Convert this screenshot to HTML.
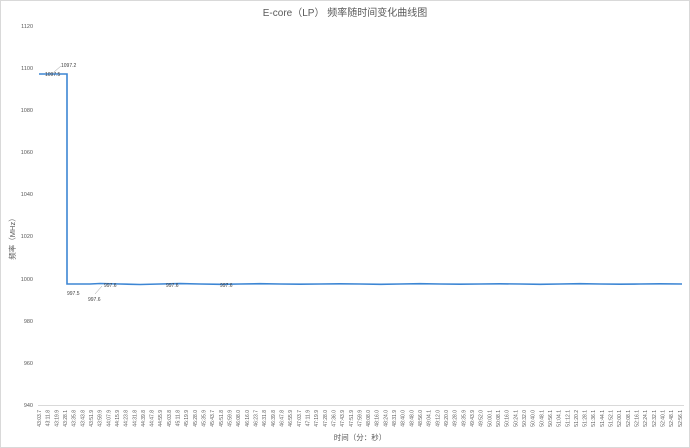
<!DOCTYPE html>
<html><head><meta charset="utf-8"><style>
html,body{margin:0;padding:0;background:#fff}
svg{display:block}
text{font-family:"Liberation Sans","Noto Sans CJK SC",sans-serif}
</style></head><body>
<svg width="690" height="448" xmlns="http://www.w3.org/2000/svg">
<rect x="0.5" y="0.5" width="689" height="447" fill="#fff" stroke="#d9d9d9"/>
<text x="345" y="16" font-size="10" fill="#595959" text-anchor="middle">E-core（LP） 频率随时间变化曲线图</text>
<g font-size="5.5" fill="#595959" text-anchor="end">
<text x="33" y="28">1120</text><text x="33" y="70">1100</text><text x="33" y="112">1080</text>
<text x="33" y="154">1060</text><text x="33" y="196">1040</text><text x="33" y="238">1020</text>
<text x="33" y="281">1000</text><text x="33" y="323">980</text><text x="33" y="365">960</text>
<text x="33" y="407">940</text>
</g>
<text transform="translate(15,237) rotate(-90)" font-size="7.5" fill="#595959" text-anchor="middle">频率（MHz）</text>
<line x1="38" y1="405.5" x2="684" y2="405.5" stroke="#d9d9d9" stroke-width="1"/>
<polyline fill="none" stroke="#3d86d4" stroke-width="1.6" points="39,74 67,74 67,284 90,284 100,283.5 120,284 140,284.5 160,284 180,283.6 200,284 220,284.3 240,284 260,283.7 280,284 300,284.2 320,284 340,283.8 360,284 380,284.3 400,284 420,283.7 440,284 460,284.2 480,284 500,283.8 520,284 540,284.3 560,284 580,283.7 600,284 620,284.2 640,284 660,283.8 682,284"/>
<g font-size="5" fill="#404040">
<text x="61" y="67">1097.2</text><text x="45" y="76">1097.5</text>
<text x="67" y="295">997.5</text><text x="88" y="301">997.6</text>
<text x="104" y="287">997.6</text><text x="166" y="287">997.6</text><text x="220" y="287">997.6</text>
</g>
<line x1="54" y1="72" x2="61" y2="66" stroke="#999" stroke-width="0.5"/>
<line x1="95" y1="294" x2="102" y2="286" stroke="#999" stroke-width="0.5"/>
<g font-size="5" fill="#595959" text-anchor="end" id="xl">
<text transform="translate(41,410) rotate(-90)">43:03.7</text>
<text transform="translate(49.66,410) rotate(-90)">43:11.8</text>
<text transform="translate(58.32,410) rotate(-90)">43:19.9</text>
<text transform="translate(66.98,410) rotate(-90)">43:28.1</text>
<text transform="translate(75.64,410) rotate(-90)">43:35.8</text>
<text transform="translate(84.3,410) rotate(-90)">43:43.8</text>
<text transform="translate(92.96,410) rotate(-90)">43:51.9</text>
<text transform="translate(101.62,410) rotate(-90)">43:59.9</text>
<text transform="translate(110.28,410) rotate(-90)">44:07.9</text>
<text transform="translate(118.94,410) rotate(-90)">44:15.9</text>
<text transform="translate(127.6,410) rotate(-90)">44:23.8</text>
<text transform="translate(136.26,410) rotate(-90)">44:31.8</text>
<text transform="translate(144.92,410) rotate(-90)">44:39.8</text>
<text transform="translate(153.58,410) rotate(-90)">44:47.8</text>
<text transform="translate(162.24,410) rotate(-90)">44:55.9</text>
<text transform="translate(170.9,410) rotate(-90)">45:03.8</text>
<text transform="translate(179.56,410) rotate(-90)">45:11.8</text>
<text transform="translate(188.22,410) rotate(-90)">45:19.9</text>
<text transform="translate(196.88,410) rotate(-90)">45:28.0</text>
<text transform="translate(205.54,410) rotate(-90)">45:35.9</text>
<text transform="translate(214.2,410) rotate(-90)">45:43.7</text>
<text transform="translate(222.86,410) rotate(-90)">45:51.8</text>
<text transform="translate(231.52,410) rotate(-90)">45:59.9</text>
<text transform="translate(240.18,410) rotate(-90)">46:08.0</text>
<text transform="translate(248.84,410) rotate(-90)">46:16.0</text>
<text transform="translate(257.5,410) rotate(-90)">46:23.7</text>
<text transform="translate(266.16,410) rotate(-90)">46:31.8</text>
<text transform="translate(274.82,410) rotate(-90)">46:39.8</text>
<text transform="translate(283.48,410) rotate(-90)">46:47.8</text>
<text transform="translate(292.14,410) rotate(-90)">46:55.9</text>
<text transform="translate(300.8,410) rotate(-90)">47:03.7</text>
<text transform="translate(309.46,410) rotate(-90)">47:11.9</text>
<text transform="translate(318.12,410) rotate(-90)">47:19.9</text>
<text transform="translate(326.78,410) rotate(-90)">47:28.0</text>
<text transform="translate(335.44,410) rotate(-90)">47:36.0</text>
<text transform="translate(344.1,410) rotate(-90)">47:43.9</text>
<text transform="translate(352.76,410) rotate(-90)">47:51.9</text>
<text transform="translate(361.42,410) rotate(-90)">47:59.9</text>
<text transform="translate(370.08,410) rotate(-90)">48:08.0</text>
<text transform="translate(378.74,410) rotate(-90)">48:16.0</text>
<text transform="translate(387.4,410) rotate(-90)">48:24.0</text>
<text transform="translate(396.06,410) rotate(-90)">48:31.9</text>
<text transform="translate(404.72,410) rotate(-90)">48:40.0</text>
<text transform="translate(413.38,410) rotate(-90)">48:48.0</text>
<text transform="translate(422.04,410) rotate(-90)">48:56.0</text>
<text transform="translate(430.7,410) rotate(-90)">49:04.1</text>
<text transform="translate(439.36,410) rotate(-90)">49:12.0</text>
<text transform="translate(448.02,410) rotate(-90)">49:20.0</text>
<text transform="translate(456.68,410) rotate(-90)">49:28.0</text>
<text transform="translate(465.34,410) rotate(-90)">49:35.9</text>
<text transform="translate(474,410) rotate(-90)">49:43.9</text>
<text transform="translate(482.66,410) rotate(-90)">49:52.0</text>
<text transform="translate(491.32,410) rotate(-90)">50:00.1</text>
<text transform="translate(499.98,410) rotate(-90)">50:08.1</text>
<text transform="translate(508.64,410) rotate(-90)">50:16.0</text>
<text transform="translate(517.3,410) rotate(-90)">50:24.1</text>
<text transform="translate(525.96,410) rotate(-90)">50:32.0</text>
<text transform="translate(534.62,410) rotate(-90)">50:40.0</text>
<text transform="translate(543.28,410) rotate(-90)">50:48.1</text>
<text transform="translate(551.94,410) rotate(-90)">50:56.1</text>
<text transform="translate(560.6,410) rotate(-90)">51:04.1</text>
<text transform="translate(569.26,410) rotate(-90)">51:12.1</text>
<text transform="translate(577.92,410) rotate(-90)">51:20.2</text>
<text transform="translate(586.58,410) rotate(-90)">51:28.1</text>
<text transform="translate(595.24,410) rotate(-90)">51:36.1</text>
<text transform="translate(603.9,410) rotate(-90)">51:44.1</text>
<text transform="translate(612.56,410) rotate(-90)">51:52.1</text>
<text transform="translate(621.22,410) rotate(-90)">52:00.1</text>
<text transform="translate(629.88,410) rotate(-90)">52:08.1</text>
<text transform="translate(638.54,410) rotate(-90)">52:16.1</text>
<text transform="translate(647.2,410) rotate(-90)">52:24.1</text>
<text transform="translate(655.86,410) rotate(-90)">52:32.1</text>
<text transform="translate(664.52,410) rotate(-90)">52:40.1</text>
<text transform="translate(673.18,410) rotate(-90)">52:48.1</text>
<text transform="translate(681.84,410) rotate(-90)">52:56.1</text>
</g>
<text x="360" y="440" font-size="7.5" fill="#595959" text-anchor="middle">时间（分：秒）</text>
</svg>
</body></html>
